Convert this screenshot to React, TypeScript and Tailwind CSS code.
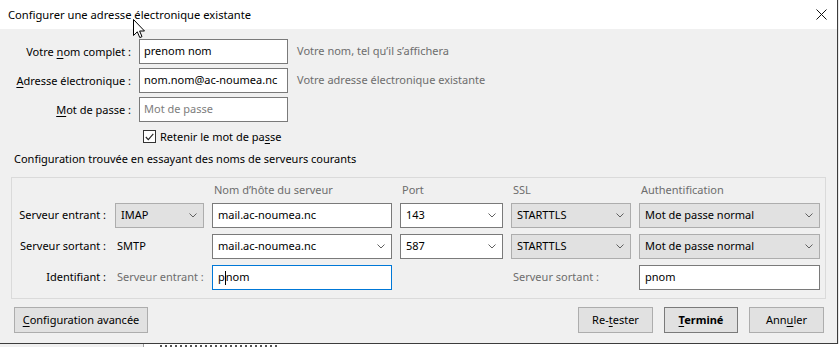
import React from "react";

const F = { fontFamily: '"Noto Sans", "Open Sans", sans-serif' };

function Chevron() {
  return (
    <svg width="8" height="5" viewBox="0 0 8 5" className="shrink-0">
      <path d="M0.5 0.5 L4 4 L7.5 0.5" fill="none" stroke="#606060" strokeWidth="1" />
    </svg>
  );
}

function GraySelect({ text }: { text: string }) {
  return (
    <div className="h-[25px] bg-[#e1e1e1] border border-[#adadad] flex items-center justify-between pl-[5px] pr-[6px] text-black whitespace-nowrap">
      <span>{text}</span>
      <Chevron />
    </div>
  );
}

function WhiteCombo({ text }: { text: string }) {
  return (
    <div className="h-[25px] bg-white border border-[#7a7a7a] flex items-center justify-between pl-[5px] pr-[6px] text-black whitespace-nowrap">
      <span>{text}</span>
      <Chevron />
    </div>
  );
}

function TextBox({ children, focus }: { children: React.ReactNode; focus?: boolean }) {
  return (
    <div
      className={
        "h-[25px] bg-white border flex items-center pl-[4px] text-black whitespace-nowrap overflow-hidden " +
        (focus ? "border-[#0078d7]" : "border-[#7a7a7a]")
      }
    >
      {children}
    </div>
  );
}

function Btn({ children, w, strong }: { children: React.ReactNode; w: string; strong?: boolean }) {
  return (
    <div
      className={
        "h-[26px] bg-[#e1e1e1] border flex items-center justify-center text-black whitespace-nowrap " +
        w +
        (strong ? " border-[#7a7a7a] font-bold" : " border-[#adadad]")
      }
    >
      {children}
    </div>
  );
}

const COLS = "grid grid-cols-[95px_89px_180px_103px_120px_181px] gap-x-2";

export default function App() {
  return (
    <div className="w-[839px] h-[347px] overflow-hidden bg-white flex flex-col text-[11px] text-black relative" style={F}>
      <div className="flex h-[344px]">
        <div className="w-[838px] h-[344px] flex flex-col border-r border-b border-[#3c3c3c] bg-[#f0f0f0]">
          {/* title bar */}
          <div className="h-[29px] bg-white flex items-center justify-between pl-[8px] pr-[10px] shrink-0">
            <span className="leading-none text-[11.2px]">Configurer une adresse électronique existante</span>
            <svg width="11" height="11" viewBox="0 0 11 11">
              <path d="M0.5 0.5 L10.5 10.5 M10.5 0.5 L0.5 10.5" stroke="#111" strokeWidth="1" />
            </svg>
          </div>

          {/* top form */}
          <div className="pt-[10px] grid grid-cols-[131px_149px_auto] gap-x-2 gap-y-1 items-center whitespace-nowrap">
            <div className="text-right leading-none">
              Votre <span className="underline underline-offset-2">n</span>om complet :
            </div>
            <TextBox>prenom nom</TextBox>
            <div className="text-[#6d6d6d] pl-[1px]">Votre nom, tel qu’il s’affichera</div>

            <div className="text-right leading-none">
              <span className="underline underline-offset-2">A</span>dresse électronique :
            </div>
            <TextBox>nom.nom@ac-noumea.nc</TextBox>
            <div className="text-[#6d6d6d] pl-[1px]">Votre adresse électronique existante</div>

            <div className="text-right leading-none">
              <span className="underline underline-offset-2">M</span>ot de passe :
            </div>
            <TextBox>
              <span className="text-[#7d7d7d]">Mot de passe</span>
            </TextBox>
            <div />
          </div>

          {/* checkbox */}
          <div className="mt-[8px] h-[13px] flex items-center pl-[143px] whitespace-nowrap">
            <div className="w-[13px] h-[13px] bg-white border border-[#333] flex items-center justify-center">
              <svg width="9" height="8" viewBox="0 0 9 8">
                <path d="M0.8 4 L3.3 6.6 L8.3 0.8" fill="none" stroke="#222" strokeWidth="1.1" />
              </svg>
            </div>
            <span className="ml-[4px] leading-none">
              Retenir le mot de pa<span className="underline underline-offset-2">s</span>se
            </span>
          </div>

          <div className="mt-[8px] h-[16px] pl-[14px] flex items-center whitespace-nowrap">
            Configuration trouvée en essayant des noms de serveurs courants
          </div>

          {/* group box */}
          <div className="mt-[10px] ml-[11px] w-[815px] h-[122px] border border-[#dadada] flex flex-col whitespace-nowrap">
            <div className={"h-[25px] items-center text-[#6d6d6d] " + COLS}>
              <div />
              <div />
              <div className="pl-[2px]">Nom d’hôte du serveur</div>
              <div className="pl-[2px]">Port</div>
              <div className="pl-[2px]">SSL</div>
              <div className="pl-[2px]">Authentification</div>
            </div>
            <div className={"grid-rows-[25px_25px_25px] gap-y-[6px] items-center " + COLS}>
              <div className="text-right pr-[1px]">Serveur entrant :</div>
              <GraySelect text="IMAP" />
              <TextBox>
                <span className="pl-[1px]">mail.ac-noumea.nc</span>
              </TextBox>
              <WhiteCombo text="143" />
              <GraySelect text="STARTTLS" />
              <GraySelect text="Mot de passe normal" />

              <div className="text-right pr-[1px]">Serveur sortant :</div>
              <div className="pl-[2px]">SMTP</div>
              <WhiteCombo text="mail.ac-noumea.nc" />
              <WhiteCombo text="587" />
              <GraySelect text="STARTTLS" />
              <GraySelect text="Mot de passe normal" />

              <div className="text-right pr-[1px]">Identifiant :</div>
              <div className="pl-[2px] text-[#6d6d6d]">Serveur entrant :</div>
              <TextBox focus>
                <span className="pl-[1px]">p</span>
                <span className="inline-block w-[1px] h-[14px] bg-black" />
                <span>nom</span>
              </TextBox>
              <div />
              <div className="pl-[2px] text-[#6d6d6d]">Serveur sortant :</div>
              <TextBox>
                <span className="pl-[1px]">pnom</span>
              </TextBox>
            </div>
          </div>

          {/* buttons */}
          <div className="mt-[8px] flex items-center pl-[14px] pr-[13px]">
            <Btn w="w-[134px]">
              <span>
                <span className="underline underline-offset-2">C</span>onfiguration avancée
              </span>
            </Btn>
            <div className="flex-1" />
            <div className="flex gap-[11px]">
              <Btn w="w-[75px]">
                <span>
                  Re-<span className="underline underline-offset-2">t</span>ester
                </span>
              </Btn>
              <Btn w="w-[74px]" strong>
                <span>
                  <span className="underline underline-offset-2">T</span>erminé
                </span>
              </Btn>
              <Btn w="w-[75px]">
                <span>
                  Ann<span className="underline underline-offset-2">u</span>ler
                </span>
              </Btn>
            </div>
          </div>
        </div>
        <div className="w-[1px] bg-[#e8e8e8]" />
      </div>

      {/* background window peeking below */}
      <div className="h-[3px] flex bg-white">
        <div className="w-[143px] bg-[#f0f0f0]" />
        <div className="w-[1px] bg-[#a0a0a0]" />
        <div className="ml-[16px] mt-[1px] w-[120px] h-[2px] bg-[repeating-linear-gradient(90deg,#555_0px,#555_2px,transparent_2px,transparent_5px)]" />
      </div>

      {/* mouse cursor overlay */}
      <svg className="absolute left-[133px] top-[19px]" width="13" height="20" viewBox="0 0 13 20">
        <path d="M0.5 0.5 L0.5 16.5 L4.3 12.8 L6.8 18.6 L9 17.6 L6.6 12 L11.5 12 Z" fill="#fff" stroke="#000" strokeWidth="1" strokeLinejoin="miter" />
      </svg>
    </div>
  );
}
